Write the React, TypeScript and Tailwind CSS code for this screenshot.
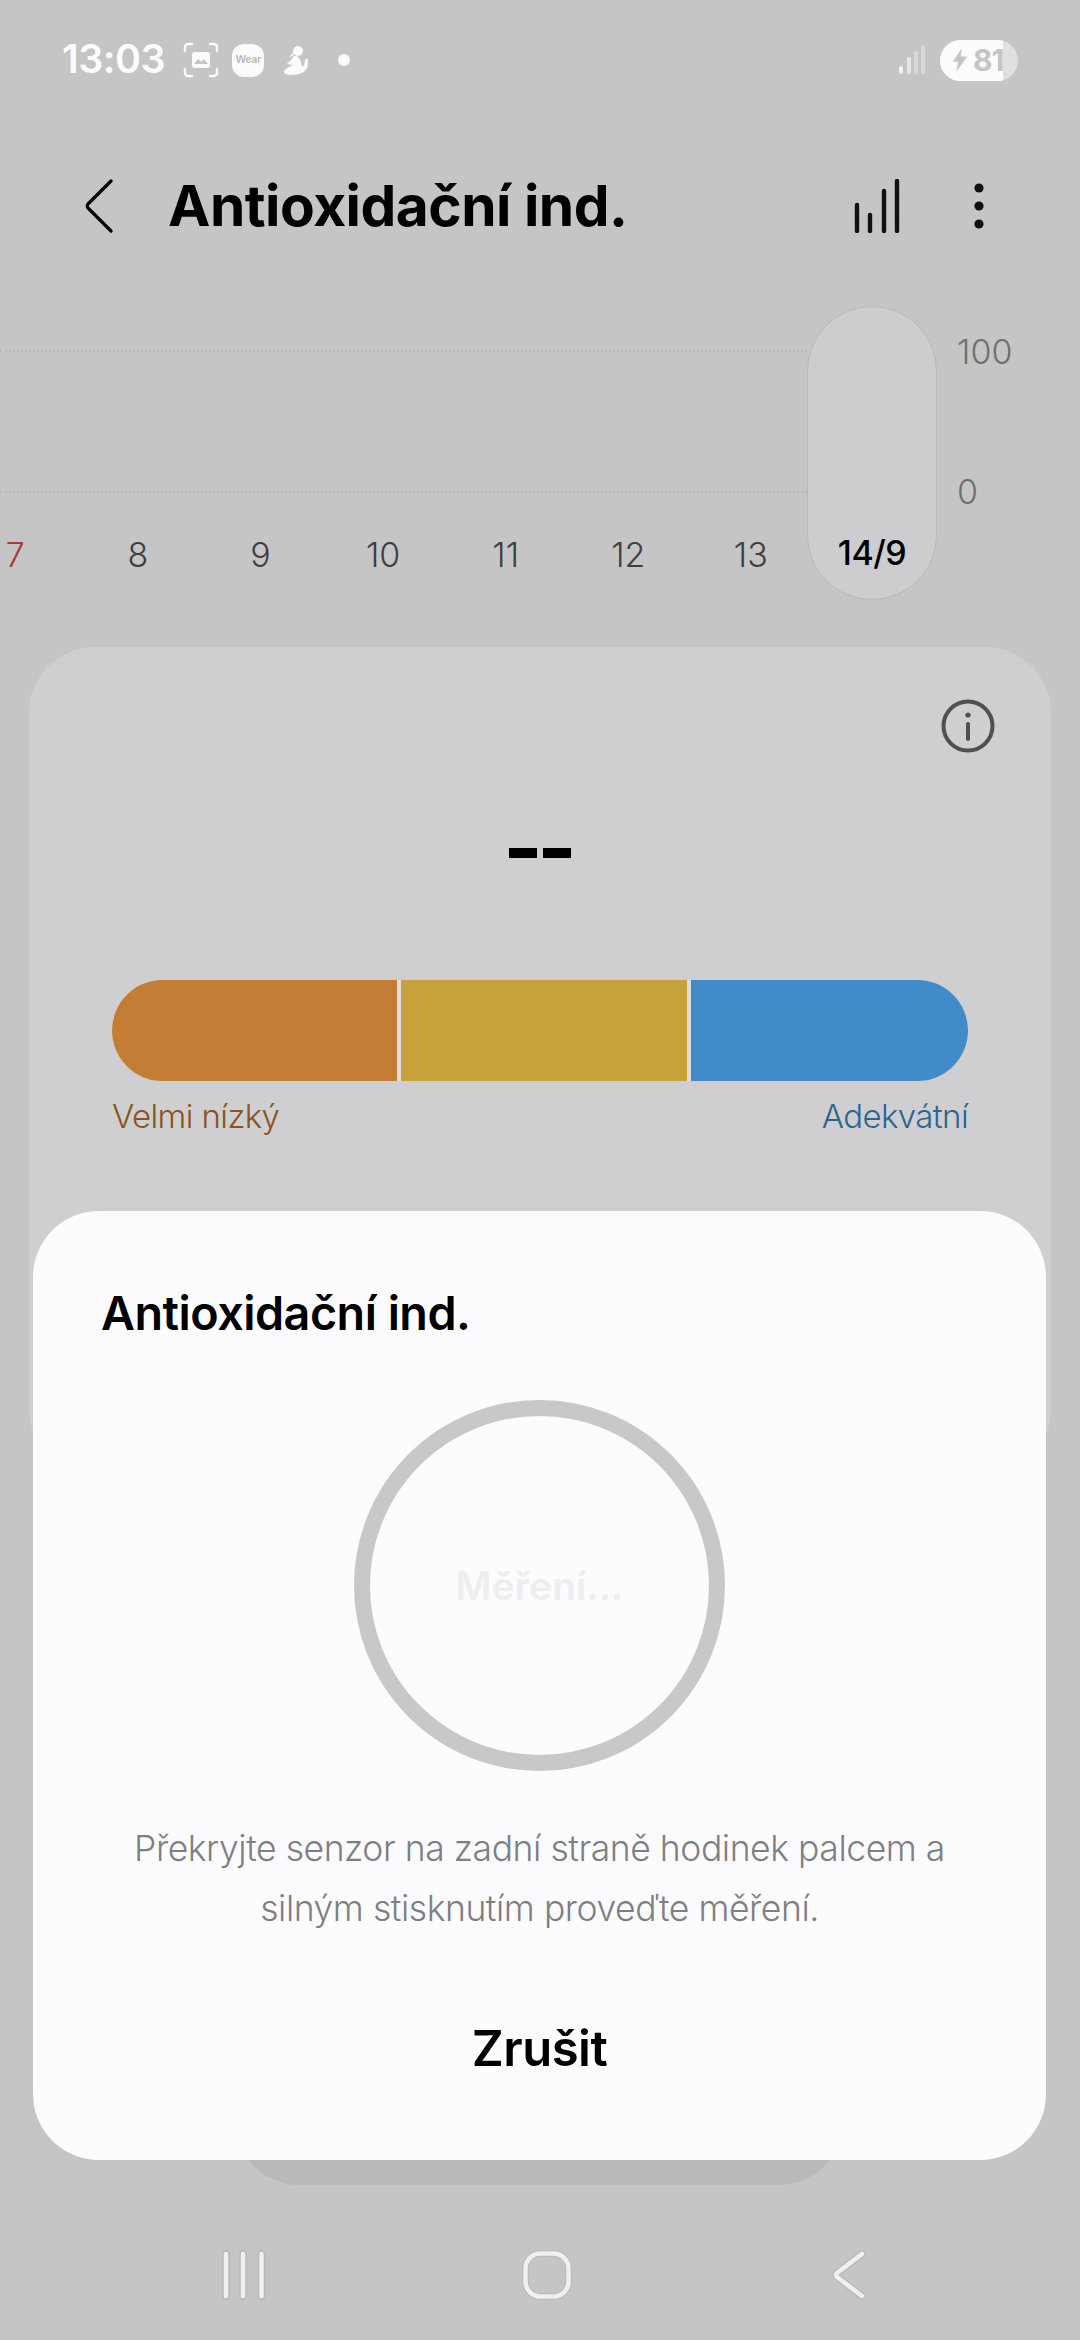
const font = { fontFamily: 'Inter, "Noto Sans", sans-serif' };

function StatusBar() {
  return (
    <div className="flex h-[118px] items-center pl-[62px] pr-[62px] pt-[2px]">
      <span className="text-[39.5px] font-semibold leading-none tracking-[-0.5px] text-[#fcfcfc]">13:03</span>
      <svg width="36" height="36" viewBox="0 0 36 36" className="ml-[18px]" fill="none" stroke="#fcfcfc" strokeWidth="2.4" strokeLinecap="round">
        <path d="M2 9V5a3 3 0 0 1 3-3h4M27 2h4a3 3 0 0 1 3 3v4M34 27v4a3 3 0 0 1-3 3h-4M9 34H5a3 3 0 0 1-3-3v-4" />
        <rect x="9" y="10" width="18" height="16" rx="3" fill="#fcfcfc" stroke="none" />
        <path d="M11 22l4-5 3 3 3-3 4 5z" fill="#c5c5c5" stroke="none" />
      </svg>
      <div className="ml-[13px] flex h-[33px] w-[32px] items-center justify-center rounded-[12px] bg-[#fcfcfc] text-[10.5px] font-semibold tracking-[-0.3px] text-[#b9b9b9]">Wear</div>
      <svg width="26" height="30" viewBox="0 0 26 30" className="ml-[19px]" fill="#fcfcfc">
        <circle cx="15" cy="6" r="5" />
        <path d="M11 7L6 12l4-1z" />
        <path d="M11 11c-2 3-5 6-7 8l6 1c-4 2-9 4-9 7 0 2 3 3 7 3 9 0 17-3 17-12 0-1 0-3-1-5l-2 2c0 3-1 6-3 7 0-4-2-9-5-11z" />
      </svg>
      <span className="ml-[29px] h-[12px] w-[12px] rounded-full bg-[#fcfcfc]" />
      <svg width="28" height="30" viewBox="0 0 28 30" className="ml-auto" strokeLinecap="round" strokeWidth="4" fill="none">
        <path d="M3 27v-4" stroke="#f4f4f4" />
        <path d="M11 27V14" stroke="#e6e6e6" />
        <path d="M18 27V8" stroke="#d8d8d8" />
        <path d="M25 27V2" stroke="#d8d8d8" />
      </svg>
      <div className="relative ml-[14px] flex h-[41px] w-[78px] items-center overflow-hidden rounded-full bg-[#e0e0e0]">
        <div className="flex h-full w-[63px] items-center bg-[#fcfcfc] pl-[11px] text-[30px] font-bold leading-none text-[#c5c5c5]">
          <svg width="18" height="28" viewBox="0 0 20 30" fill="#c5c5c5" className="shrink-0">
            <path d="M12 2L2 17h6L6 28l12-17h-7z" />
          </svg>
          <span className="ml-[4px] tracking-[-1px]">81</span>
        </div>
      </div>
    </div>
  );
}

function Header() {
  return (
    <div className="mt-[43px] flex h-[90px] items-center">
      <svg width="28" height="54" viewBox="0 0 28 54" fill="none" stroke="#000" strokeWidth="3.2" strokeLinecap="round" strokeLinejoin="round" className="ml-[85px]">
        <path d="M26 2L3 25c-1 1-1 3 0 4l23 23" />
      </svg>
      <h1 className="ml-[55px] text-[56.8px] font-bold leading-none tracking-[-0.5px] text-black">Antioxidační ind.</h1>
      <svg width="46" height="54" viewBox="0 0 46 54" fill="none" stroke="#111" strokeWidth="4.4" strokeLinecap="round" className="ml-auto">
        <path d="M3 26v26M16 36v16M30 12v40M43 2v50" />
      </svg>
      <svg width="10" height="46" viewBox="0 0 10 46" fill="#111" className="ml-[74px] mr-[96px]">
        <circle cx="5" cy="5" r="4.6" />
        <circle cx="5" cy="23" r="4.6" />
        <circle cx="5" cy="41" r="4.6" />
      </svg>
    </div>
  );
}

const days = [
  { t: '7', c: 'text-[#a83a34]' },
  { t: '8', c: 'text-[#3f3f41]' },
  { t: '9', c: 'text-[#3f3f41]' },
  { t: '10', c: 'text-[#3f3f41]' },
  { t: '11', c: 'text-[#3f3f41]' },
  { t: '12', c: 'text-[#3f3f41]' },
  { t: '13', c: 'text-[#3f3f41]' },
];

function Chart() {
  return (
    <div className="relative mt-[55px] h-[294px]">
      <div className="absolute left-0 top-[44px] h-0 w-[807px] border-t-2 border-dotted border-[#b9b9b9]" />
      <div className="absolute left-0 top-[185px] h-0 w-[807px] border-t-2 border-dotted border-[#b9b9b9]" />
      <div className="absolute left-[957px] top-[26px] text-[34px] font-light leading-[40px] text-[#6f6f71]">100</div>
      <div className="absolute left-[957px] top-[166px] text-[34px] font-light leading-[40px] text-[#6f6f71]">0</div>
      <div className="absolute left-[807px] top-0 flex h-[294px] w-[130px] items-end justify-center rounded-full border border-[#b9b9bb] bg-[#cdcdcf] pb-[26px] text-[34px] font-medium leading-[40px] tracking-[-0.5px] text-black">
        14/9
      </div>
      <div className="absolute left-[-46px] top-[229px] flex">
        {days.map((d) => (
          <div key={d.t} className={`w-[122.6px] text-center text-[34px] font-light leading-[40px] ${d.c}`}>
            {d.t}
          </div>
        ))}
      </div>
    </div>
  );
}

function ResultCard() {
  return (
    <div className="mx-[29px] mt-[47px] h-[828px] rounded-[66px] bg-[#cfcfd1] px-[83px] pt-[52px]">
      <div className="flex justify-end">
        <svg width="54" height="54" viewBox="0 0 54 54" fill="none" stroke="#505052" strokeWidth="4" strokeLinecap="round" className="mr-[-27px]">
          <circle cx="27" cy="27" r="24.5" />
          <path d="M27 25v15" />
          <circle cx="27" cy="16" r="2.6" fill="#505052" stroke="none" />
        </svg>
      </div>
      <div className="mt-[95px] flex justify-center gap-[6px]">
        <span className="h-[10px] w-[28px] bg-black" />
        <span className="h-[10px] w-[28px] bg-black" />
      </div>
      <div className="mt-[122px] flex h-[101px] gap-[4px] overflow-hidden rounded-full bg-[#dedede]">
        <div className="w-[285px] bg-[#c47d35]" />
        <div className="w-[286px] bg-[#c8a33c]" />
        <div className="flex-1 bg-[#418cc8]" />
      </div>
      <div className="mt-[15px] flex justify-between text-[33px] font-light leading-[40px] tracking-[-0.6px]">
        <span className="text-[#8a5320]">Velmi nízký</span>
        <span className="text-[#2a6690]">Adekvátní</span>
      </div>
    </div>
  );
}

function Sheet() {
  return (
    <div className="absolute left-[33px] top-[1211px] flex h-[949px] w-[1013px] flex-col items-center rounded-[66px] bg-[#fcfcff]">
      <h2 className="mt-[74px] self-start pl-[68px] text-[46.7px] font-semibold leading-[56px] tracking-[-0.5px] text-black">Antioxidační ind.</h2>
      <div className="mt-[59px] flex h-[371px] w-[371px] items-center justify-center rounded-full border-[16px] border-[#c8c8ca]">
        <span className="text-[39px] font-semibold leading-none text-[#eeeef0]">Měření...</span>
      </div>
      <p className="mt-[48px] text-center text-[35.5px] font-light leading-[60px] tracking-[-0.45px] text-[#7f7f82]">
        Překryjte senzor na zadní straně hodinek palcem a
        <br />
        silným stisknutím proveďte měření.
      </p>
      <button className="mt-[80px] text-[49px] font-semibold leading-[60px] tracking-[-0.5px] text-black">Zrušit</button>
    </div>
  );
}

function NavBar() {
  return (
    <div className="absolute bottom-0 left-0 flex h-[130px] w-full items-start pt-[40px]">
      <svg width="48" height="50" viewBox="0 0 48 50" fill="none" strokeLinecap="round" className="ml-[222px]">
        <path d="M4 4v42M21 4v42M39.5 4v42" stroke="#bbbbbb" strokeWidth="8" />
        <path d="M4 4v42M21 4v42M39.5 4v42" stroke="#f0f0f0" strokeWidth="4.5" />
      </svg>
      <svg width="50" height="50" viewBox="0 0 50 50" fill="none" className="ml-[252px]">
        <rect x="3.5" y="3.5" width="43" height="43" rx="15" stroke="#bbbbbb" strokeWidth="7" />
        <rect x="3.5" y="3.5" width="43" height="43" rx="15" stroke="#f0f0f0" strokeWidth="4.5" />
      </svg>
      <svg width="36" height="50" viewBox="0 0 36 50" fill="none" strokeLinecap="round" strokeLinejoin="round" className="ml-[259px]">
        <path d="M31 4L6 23c-1 1-1 3 0 4l25 19" stroke="#bbbbbb" strokeWidth="7.5" />
        <path d="M31 4L6 23c-1 1-1 3 0 4l25 19" stroke="#f0f0f0" strokeWidth="4.5" />
      </svg>
    </div>
  );
}

export default function App() {
  return (
    <div className="relative h-[2340px] w-[1080px] overflow-hidden bg-[#c5c5c5]" style={font}>
      <StatusBar />
      <Header />
      <Chart />
      <ResultCard />
      <div className="absolute left-[234px] top-[2100px] h-[85px] w-[610px] rounded-b-[66px] bg-[#b9b9bb]" />
      <Sheet />
      <NavBar />
    </div>
  );
}
